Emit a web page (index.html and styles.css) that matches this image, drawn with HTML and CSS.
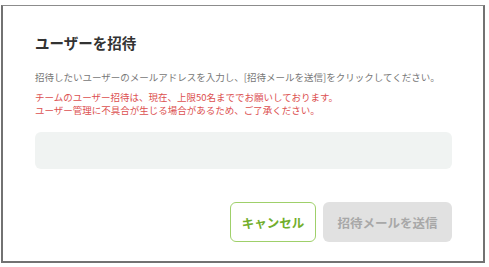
FILE: index.html
```html
<!DOCTYPE html>
<html lang="ja">
<head>
<meta charset="utf-8">
<link rel="stylesheet" href="styles.css">
</head>
<body>
<div class="frame">
  <div class="dialog">
    <h1 class="title">ユーザーを招待</h1>
    <p class="desc">招待したいユーザーのメールアドレスを入力し、[招待メールを送信]をクリックしてください。</p>
    <p class="warn">チームのユーザー招待は、現在、上限50名まででお願いしております。<br>ユーザー管理に不具合が生じる場合があるため、ご了承ください。</p>
    <div class="input"></div>
    <div class="actions">
      <button class="btn btn-cancel">キャンセル</button>
      <button class="btn btn-send">招待メールを送信</button>
    </div>
  </div>
</div>
</body>
</html>
```
FILE: styles.css
```css
html, body {
  margin: 0;
  padding: 0;
  background: #ffffff;
}
body {
  font-family: "Noto Sans CJK JP", "Noto Sans", sans-serif;
}
.frame {
  margin: 5px 0 0 1px;
  width: 484px;
  height: 258px;
  box-sizing: border-box;
  border: 2px solid #727272;
  border-top: 1px solid #8c8c8c;
  background: #ffffff;
}
.dialog {
  padding: 27px 31px 0 32px;
}
.title {
  margin: 0;
  font-size: 14.5px;
  line-height: 20px;
  font-weight: 700;
  color: #333333;
}
.desc {
  margin: 17px 0 0;
  font-size: 9.5px;
  line-height: 14px;
  color: #777777;
  white-space: nowrap;
}
.warn {
  margin: 7px 0 0;
  font-size: 9.5px;
  line-height: 13px;
  color: #dc5050;
  white-space: nowrap;
}
.input {
  margin-top: 15px;
  height: 37px;
  border-radius: 6px;
  background: #f0f3f2;
}
.actions {
  display: flex;
  justify-content: flex-end;
  gap: 7px;
  margin-top: 33px;
}
.btn {
  font-family: inherit;
  font-size: 12.5px;
  font-weight: 700;
  border-radius: 6px;
  box-sizing: border-box;
  height: 40px;
  padding: 0;
}
.btn-cancel {
  width: 86px;
  background: #ffffff;
  border: 1px solid #9fd06a;
  color: #72ae2c;
}
.btn-send {
  width: 129px;
  background: #e1e1e1;
  border: none;
  color: #a8a8a8;
}
```
